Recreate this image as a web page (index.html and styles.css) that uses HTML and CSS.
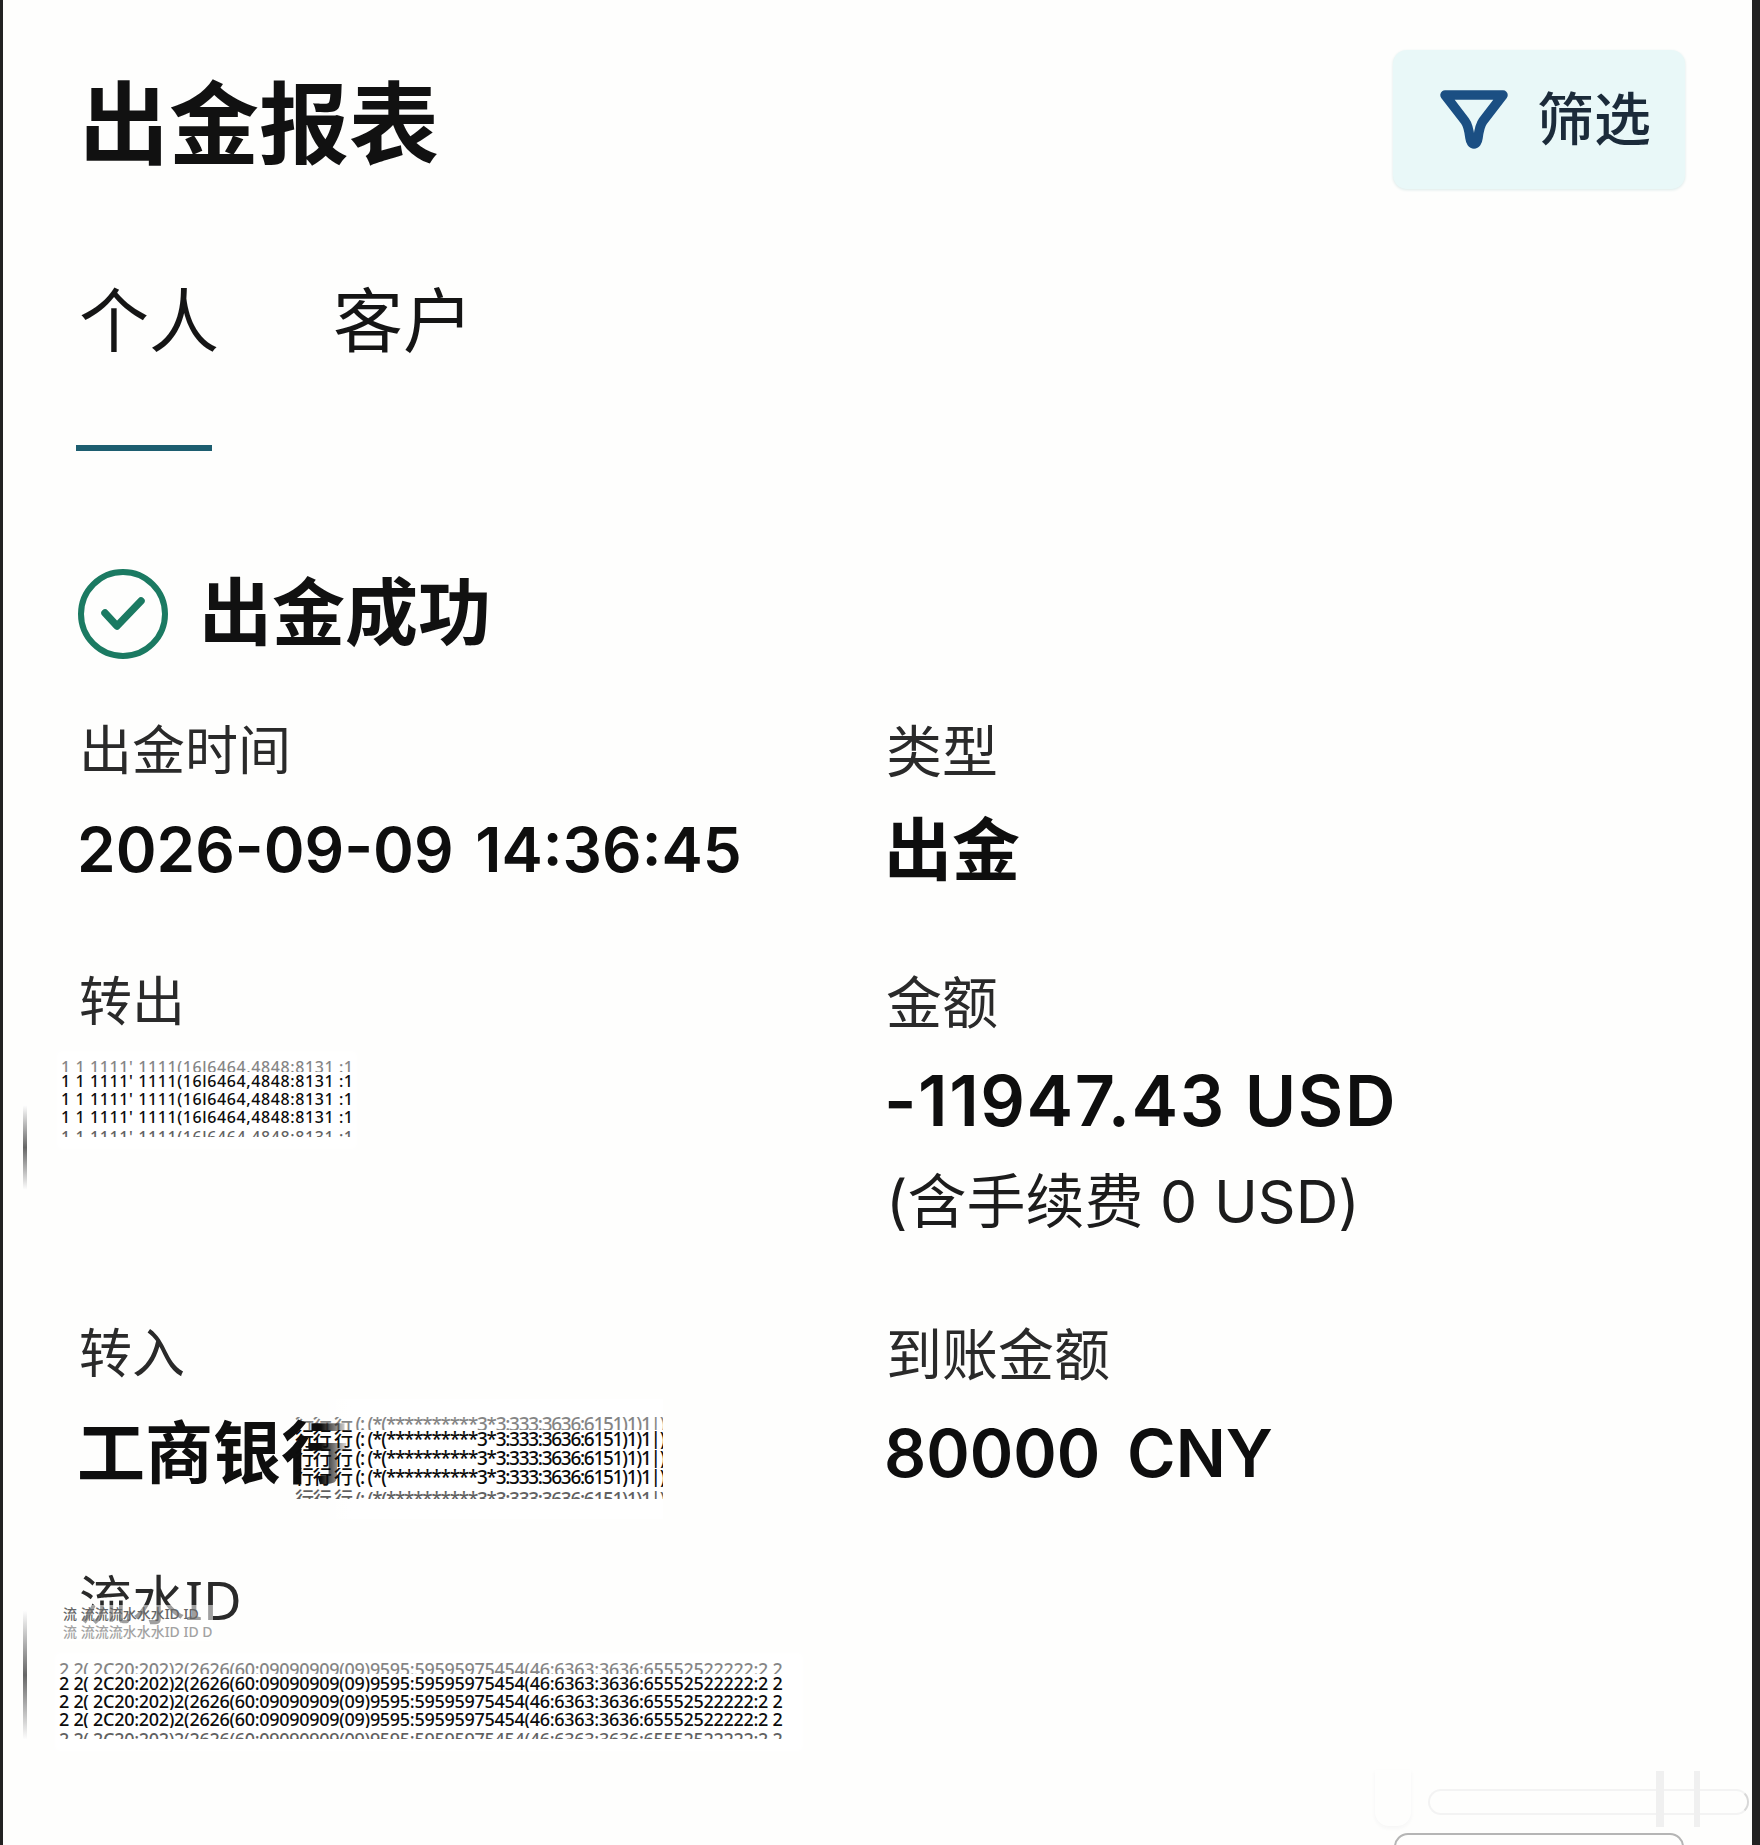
FILE: index.html
```html
<!DOCTYPE html>
<html lang="zh-CN">
<head>
<meta charset="utf-8">
<title>出金报表</title>
<link rel="stylesheet" href="styles.css">
</head>
<body>
<main class="page">
  <header class="top">
    <h1 class="title">出金报表</h1>
    <button class="filter" type="button">
      <svg class="filter-icon" viewBox="0 0 72 64" aria-hidden="true"><path d="M7 7H65L45 33C42 37 41 42 40 50C39 58 33 58 32 50C31 42 30 37 27 33Z"/></svg>
      <span class="filter-text">筛选</span>
    </button>
  </header>
  <nav class="tabs">
    <div class="tab tab-active">个人</div>
    <div class="tab">客户</div>
  </nav>
  <section class="status">
    <svg class="status-icon" viewBox="0 0 90 92" aria-hidden="true"><circle cx="45" cy="46" r="42"/><path d="M27 45L39 58L63 33"/></svg>
    <h2 class="status-text">出金成功</h2>
  </section>
  <section class="details">
    <div class="row row-a">
      <div class="cell"><div class="label">出金时间</div><div class="value value-date">2026-09-09 14:36:45</div></div>
      <div class="cell"><div class="label label-r">类型</div><div class="value value-cn">出金</div></div>
    </div>
    <div class="row row-b">
      <div class="cell">
        <div class="label">转出</div>
        <div class="smear smear-a">
          <div class="sl sl-top">1 1 1111' 1111(16l6464,4848:8131 :1</div>
          <div class="sl">1 1 1111' 1111(16l6464,4848:8131 :1</div>
          <div class="sl">1 1 1111' 1111(16l6464,4848:8131 :1</div>
          <div class="sl">1 1 1111' 1111(16l6464,4848:8131 :1</div>
          <div class="sl sl-bot">1 1 1111' 1111(16l6464,4848:8131 :1</div>
        </div>
      </div>
      <div class="cell">
        <div class="label label-r">金额</div>
        <div class="value value-amount">-11947.43 USD</div>
        <div class="fee">(含手续费 0 USD)</div>
      </div>
    </div>
    <div class="row row-c">
      <div class="cell">
        <div class="label">转入</div>
        <div class="value value-cn">工商银行
          <div class="smear smear-b">
            <div class="sl sl-top">行行 行 (: (*(**********3*3:333:3636:6151)1)1|) )</div>
            <div class="sl">行行 行 (: (*(**********3*3:333:3636:6151)1)1|) )</div>
            <div class="sl">行行 行 (: (*(**********3*3:333:3636:6151)1)1|) )</div>
            <div class="sl">行行 行 (: (*(**********3*3:333:3636:6151)1)1|) )</div>
            <div class="sl sl-bot">行行 行 (: (*(**********3*3:333:3636:6151)1)1|) )</div>
          </div>
        </div>
      </div>
      <div class="cell"><div class="label label-r">到账金额</div><div class="value value-cny">80000 CNY</div></div>
    </div>
    <div class="row">
      <div class="cell">
        <div class="label">流水ID
          <div class="smear smear-c">
            <div class="sl">流 流流流水水水ID ID</div>
            <div class="sl sl-soft">流 流流流水水水ID ID D /</div>
          </div>
        </div>
        <div class="smear smear-d">
          <div class="sl sl-top">2 2( 2C20:202)2(2626(60:09090909(09)9595:59595975454(46:6363:3636:65552522222:2 2</div>
          <div class="sl">2 2( 2C20:202)2(2626(60:09090909(09)9595:59595975454(46:6363:3636:65552522222:2 2</div>
          <div class="sl">2 2( 2C20:202)2(2626(60:09090909(09)9595:59595975454(46:6363:3636:65552522222:2 2</div>
          <div class="sl">2 2( 2C20:202)2(2626(60:09090909(09)9595:59595975454(46:6363:3636:65552522222:2 2</div>
          <div class="sl sl-bot">2 2( 2C20:202)2(2626(60:09090909(09)9595:59595975454(46:6363:3636:65552522222:2 2</div>
        </div>
      </div>
      <div class="cell"></div>
    </div>
  </section>
  <div class="edge edge-a"></div>
  <div class="edge edge-b"></div>
  <div class="smudge"></div>
  <div class="pill"></div>
  <div class="bottom-card"></div>
</main>
</body>
</html>
```
FILE: styles.css
```css
* { box-sizing: border-box; }
html, body { margin: 0; padding: 0; background: #fff; }
.page {
  position: relative;
  width: 1760px;
  height: 1845px;
  overflow: hidden;
  padding: 50px 67px 0 76px;
  background: #fefefd;
  border-left: 3px solid #222;
  border-right: 8px solid #222;
  font-family: "Noto Sans", "Noto Sans CJK SC", sans-serif;
  color: #111;
}
.top { display: flex; justify-content: space-between; align-items: flex-start; }
.title { margin: 17px 0 0 0; font-size: 90px; line-height: 110px; font-weight: 700; }
.filter {
  display: flex; align-items: center; gap: 27px;
  width: 292px; height: 139px; padding: 0 0 0 45px;
  border: 0; border-radius: 14px;
  background: #e9f8f8;
  box-shadow: 0 1px 3px #dbe9e8;
  font-family: inherit; font-size: 57px; font-weight: 500; color: #1b2b3a;
}
.filter-text { margin-bottom: 8px; }
.filter-icon { width: 72px; height: 64px; flex: none; }
.filter-icon path { fill: none; stroke: #1b4f83; stroke-width: 9.500; stroke-linejoin: round; }
.tabs { display: flex; gap: 114px; margin-top: 62px; }
.tab { width: 140px; height: 200px; padding-top: 23px; font-size: 70px; line-height: 92px; text-align: center; white-space: nowrap; color: #151515; }
.tab-active { position: relative; }
.tab-active::after { content: ""; position: absolute; left: -3px; bottom: 0; width: 136px; height: 6px; background: #1d5e70; }
.status { display: flex; align-items: center; gap: 31px; margin: 117px 0 0 -1px; }
.status-icon { width: 90px; height: 92px; flex: none; }
.status-icon circle { fill: none; stroke: #1b7a62; stroke-width: 6; }
.status-icon path { fill: none; stroke: #1b7a62; stroke-width: 7.500; stroke-linecap: round; stroke-linejoin: round; }
.status-text { margin: -6px 0 0 0; font-size: 73px; line-height: 90px; font-weight: 700; }
.details { margin-top: 57px; }
.row { display: grid; grid-template-columns: 807px 1fr; }
.row-a { height: 251px; }
.row-b { height: 352px; }
.row-c { height: 247px; }
.label { font-size: 53px; line-height: 66px; color: #2a2a2a; }
.label-r { font-size: 56px; }
.value {
  position: relative;
  margin: 24px 0 0 -2px;
  font-family: Inter, "Noto Sans CJK SC", sans-serif;
  font-size: 66px; line-height: 86px; font-weight: 600;
  white-space: nowrap; color: #0e0e0e;
}
.value-date { font-size: 62px; word-spacing: 6px; }
.value-amount { font-size: 70px; letter-spacing: 1.500px; }
.value-cny { word-spacing: 10px; }
.value-cn { font-size: 68px; }
.fee {
  margin-top: 21px;
  font-family: Inter, "Noto Sans CJK SC", sans-serif;
  font-size: 59px; line-height: 74px; color: #1c1c1c;
}
.smear {
  position: absolute; z-index: 1;
  background: #fff;
  box-shadow: 0 0 6px 4px #fff;
  white-space: nowrap;
  font-family: "Noto Sans", "Noto Sans CJK SC", sans-serif;
  font-weight: 500;
  letter-spacing: 0;
  color: #0c0c0c;
}
.sl { height: 18px; line-height: 18px; overflow: hidden; }
.sl-top { height: 11px; line-height: 9px; opacity: .5; display: flex; align-items: flex-end; }
.sl-bot { height: 11px; line-height: 22px; opacity: .65; }
.sl-soft { opacity: .6; }
.cell { position: relative; }
.smear-a { left: -18px; top: 87px; width: 292px; padding: 6px 0 8px 0; font-size: 16px; letter-spacing: .6px; }
.smear-b {
  left: 214px; top: -11px; width: 372px; padding: 18px 0 20px 4px;
  background: linear-gradient(90deg, transparent 30px, #fff 60px);
  box-shadow: none;
  font-size: 19px; letter-spacing: -1.300px;
}
.smear-b .sl { height: 19px; line-height: 19px; }
.smear-b .sl-top { height: 13px; line-height: 11px; }
.smear-b .sl-bot { height: 12px; line-height: 24px; }
.smear-c {
  left: -16px; top: 38px; width: 150px;
  background: rgba(255, 255, 255, .55);
  box-shadow: none;
  font-size: 14px; color: #666;
}
.smear-d { left: -20px; top: 90px; width: 740px; padding: 6px 0 8px 0; font-size: 18px; letter-spacing: -.3px; }
.edge { position: absolute; left: 20px; width: 4px; background: linear-gradient(#fff, #666, #fff); }
.edge-a { top: 1105px; height: 85px; }
.edge-b { top: 1610px; height: 130px; }
.smudge { position: absolute; left: 1372px; top: 1770px; width: 36px; height: 56px; border-radius: 0 0 14px 14px; box-shadow: 0 2px 4px #f5f5f5; }
.pill {
  position: absolute; left: 1425px; top: 1789px;
  width: 321px; height: 26px;
  border: 2px solid #f3f3f3; border-right-color: #d8d8d8; border-radius: 13px;
}
.pill::after {
  content: ""; position: absolute; left: 226px; top: -20px;
  width: 30px; height: 56px;
  border-left: 8px solid #f0f0f0; border-right: 6px solid #f0f0f0;
}
.bottom-card {
  position: absolute; left: 1391px; top: 1833px;
  width: 290px; height: 40px;
  border: 2px solid #b5b5b5; border-radius: 14px;
}
```
